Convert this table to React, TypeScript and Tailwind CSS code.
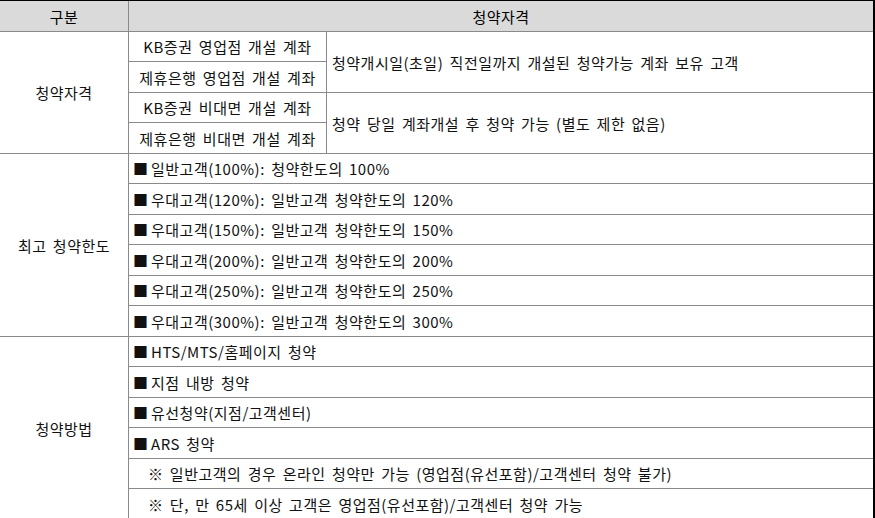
import React from "react";

const font = { fontFamily: '"Noto Sans CJK KR", "Noto Sans", sans-serif' };

const limits = [
  "일반고객(100%): 청약한도의 100%",
  "우대고객(120%): 일반고객 청약한도의 120%",
  "우대고객(150%): 일반고객 청약한도의 150%",
  "우대고객(200%): 일반고객 청약한도의 200%",
  "우대고객(250%): 일반고객 청약한도의 250%",
  "우대고객(300%): 일반고객 청약한도의 300%",
];

const methods = [
  { text: "HTS/MTS/홈페이지 청약", note: false },
  { text: "지점 내방 청약", note: false },
  { text: "유선청약(지점/고객센터)", note: false },
  { text: "ARS 청약", note: false },
  { text: "※ 일반고객의 경우 온라인 청약만 가능 (영업점(유선포함)/고객센터 청약 불가)", note: true },
  { text: "※ 단, 만 65세 이상 고객은 영업점(유선포함)/고객센터 청약 가능", note: true },
];

const cell =
  "bg-white flex items-center text-[15px] text-[#111] leading-none whitespace-nowrap tracking-[0.5px] [word-spacing:2.5px]";

const Bullet = ({ children }: { children: React.ReactNode }) => (
  <>
    <span className="mr-[3px] tracking-normal">■</span>
    <span>{children}</span>
  </>
);

const App = () => {
  return (
    <div className="h-[518px] w-[875px] overflow-hidden bg-white" style={font}>
      <div className="grid grid-cols-[128px_197px_546px] grid-rows-[30px_repeat(8,29px_30px)] gap-px bg-[#8a8a8a] border-t border-t-black border-r-2 border-r-black w-[875px]">
        {/* header */}
        <div className="bg-[#dadada] flex items-center justify-center text-[15px] leading-none tracking-[0.5px]">구분</div>
        <div className="bg-[#dadada] col-span-2 flex items-center justify-center text-[15px] leading-none tracking-[0.5px]">청약자격</div>

        {/* 청약자격 */}
        <div className={`${cell} row-span-4 justify-center`}>청약자격</div>
        <div className={`${cell} justify-center`}>KB증권 영업점 개설 계좌</div>
        <div className={`${cell} row-span-2 pl-[5px]`}>청약개시일(초일) 직전일까지 개설된 청약가능 계좌 보유 고객</div>
        <div className={`${cell} justify-center`}>제휴은행 영업점 개설 계좌</div>
        <div className={`${cell} justify-center`}>KB증권 비대면 개설 계좌</div>
        <div className={`${cell} row-span-2 pl-[5px]`}>청약 당일 계좌개설 후 청약 가능 (별도 제한 없음)</div>
        <div className={`${cell} justify-center`}>제휴은행 비대면 개설 계좌</div>

        {/* 최고 청약한도 */}
        <div className={`${cell} row-span-6 justify-center`}>최고 청약한도</div>
        {limits.map((t) => (
          <div key={t} className={`${cell} col-span-2 pl-[4px]`}>
            <Bullet>{t}</Bullet>
          </div>
        ))}

        {/* 청약방법 */}
        <div className={`${cell} row-span-6 justify-center`}>청약방법</div>
        {methods.map((m) =>
          m.note ? (
            <div key={m.text} className={`${cell} col-span-2 pl-[19px] tracking-[0.3px]`}>
              {m.text}
            </div>
          ) : (
            <div key={m.text} className={`${cell} col-span-2 pl-[4px]`}>
              <Bullet>{m.text}</Bullet>
            </div>
          )
        )}
      </div>
    </div>
  );
};

export default App;
